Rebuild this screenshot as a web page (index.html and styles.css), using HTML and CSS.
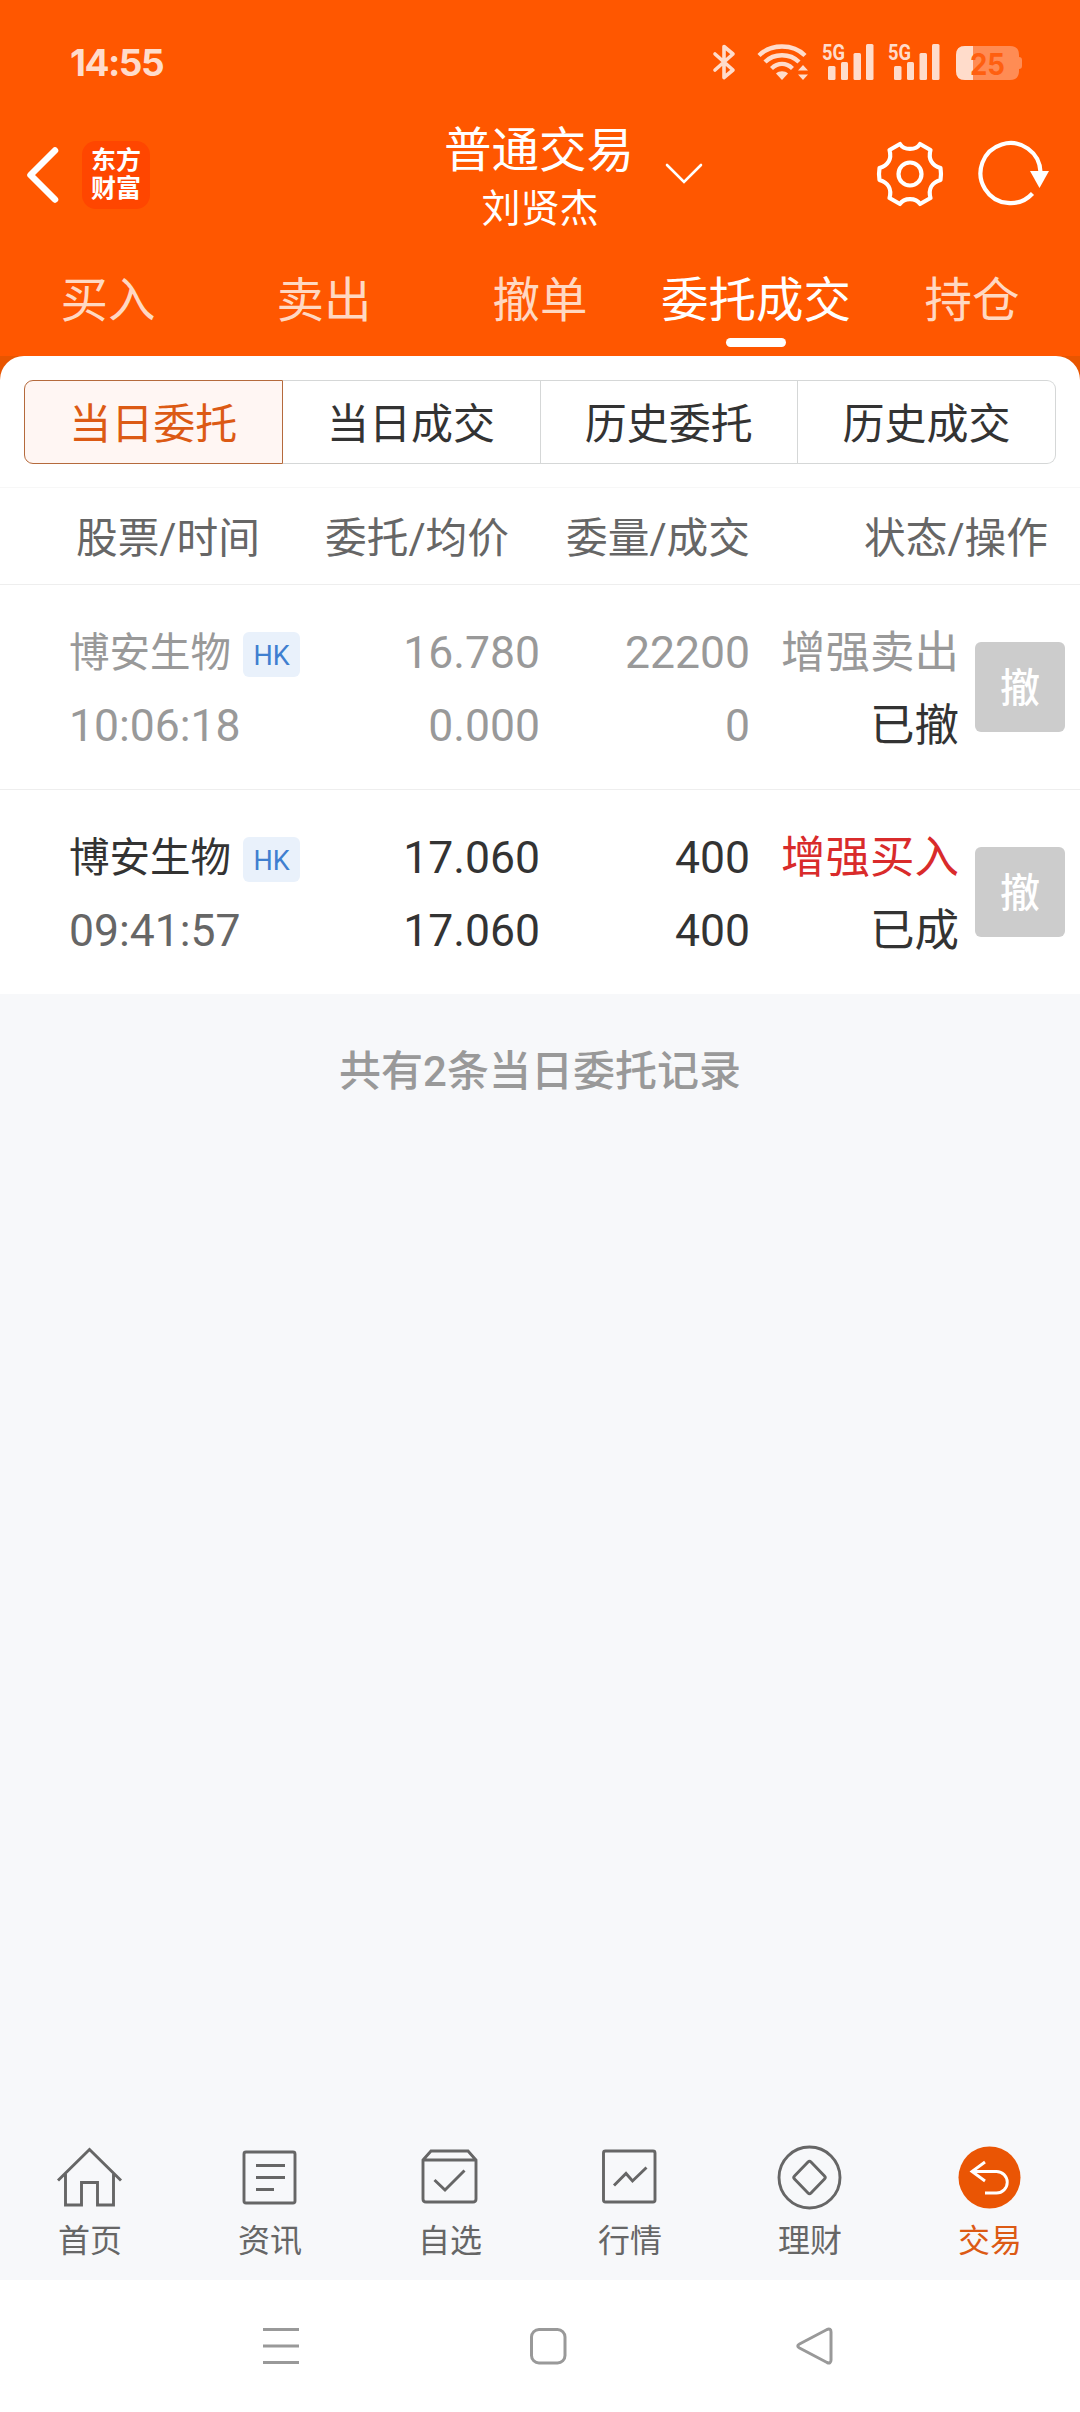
FILE: index.html
```
<!DOCTYPE html>
<html lang="zh-CN">
<head>
    <meta charset="UTF-8">
    <meta name="viewport" content="width=device-width, initial-scale=1.0">
    <title>普通交易</title>
    <link rel="stylesheet" href="styles.css">
</head>
<body>
    <div class="screen">
        <header class="top">
            <div class="statusbar">
                <span class="clock">14:55</span>
                <div class="status-icons">
                    <svg class="bluetooth" width="24" height="38" viewBox="0 0 24 38" fill="none">
                        <path d="M3 11 L21 27 L12 34.5 V3.5 L21 11 L3 27" stroke="#ffdccb" stroke-width="3.6" stroke-linejoin="round" stroke-linecap="round"/>
                    </svg>
                    <svg class="wifi" width="52" height="38" viewBox="0 0 52 38" fill="none">
                        <path d="M2 12.5 C14 .5 36 .5 48 12.5 M8 19 C17 10 33 10 42 19 M14.500 25.500 C21 19.500 29 19.500 35.500 25.500" stroke="#ffdccb" stroke-width="4.400"/>
                        <path d="M19 30.500 C22 27.500 28 27.500 31 30.500 L25 37Z" fill="#ffdccb"/>
                        <path d="M41 27.500 L46 22 L51 27.500Z M41 31.500 L46 37 L51 31.500Z" fill="#ffdccb"/>
                    </svg>
                    <svg class="signal" width="52" height="38" viewBox="0 0 52 38" fill="#ffdccb">
                        <text class="net" x="0" y="16.500" textLength="23" lengthAdjust="spacingAndGlyphs">5G</text>
                        <rect x="6" y="23" width="7.500" height="14" rx="1.500"/>
                        <rect x="19" y="19" width="7" height="18" rx="1.500"/>
                        <rect x="31.500" y="10" width="7.500" height="27" rx="1.500"/>
                        <rect x="44" y="1" width="7.500" height="36" rx="1.500"/>
                    </svg>
                    <svg class="signal" width="52" height="38" viewBox="0 0 52 38" fill="#ffdccb">
                        <text class="net" x="0" y="16.500" textLength="23" lengthAdjust="spacingAndGlyphs">5G</text>
                        <rect x="6" y="23" width="7.500" height="14" rx="1.500"/>
                        <rect x="19" y="19" width="7" height="18" rx="1.500"/>
                        <rect x="31.500" y="10" width="7.500" height="27" rx="1.500"/>
                        <rect x="44" y="1" width="7.500" height="36" rx="1.500"/>
                    </svg>
                    <svg class="battery" width="66" height="34" viewBox="0 0 66 34">
                        <path d="M9 0 H54 Q63 0 63 9 V11 Q66 11 66 14 V20 Q66 23 63 23 V25 Q63 34 54 34 H9 Q0 34 0 25 V9 Q0 0 9 0Z" fill="#ff8c54"/>
                        <path d="M17 0 H9 Q0 0 0 9 V25 Q0 34 9 34 H17Z" fill="#ffdccb"/>
                        <text class="level" x="14" y="28.500" textLength="35" lengthAdjust="spacingAndGlyphs">25</text>
                    </svg>
                </div>
            </div>

            <div class="titlebar">
                <div class="title-left">
                    <svg width="34" height="60" viewBox="0 0 34 60" fill="none">
                        <path d="M30 5.500 L5.500 30 L30 54.500" stroke="#fff" stroke-width="6.500" stroke-linecap="round" stroke-linejoin="round"/>
                    </svg>
                    <div class="logo">东方<br>财富</div>
                </div>
                <div class="title-center">
                    <h1>普通交易</h1>
                    <p>刘贤杰</p>
                </div>
                <div class="title-right">
                    <svg class="arrow-down" width="38" height="24" viewBox="0 0 38 24" fill="none">
                        <path d="M2 3 L19 20 L36 3" stroke="#fff" stroke-width="2.600" stroke-linecap="round"/>
                    </svg>
                    <svg class="gear" width="68" height="68" viewBox="0 0 68 68" fill="none" stroke="#fff" stroke-width="4.200">
                        <path d="M24 4 C28 10.500 40 10.500 44 4 L54.500 10 C52 19 56 25.500 64.500 28 Q65.500 34 64.500 40 C56 42.500 52 49 54.500 58 L44 64 C40 57.500 28 57.500 24 64 L13.500 58 C16 49 12 42.500 3.500 40 Q2.500 34 3.500 28 C12 25.500 16 19 13.500 10Z" stroke-linejoin="round"/>
                        <circle cx="34" cy="34" r="11.500"/>
                    </svg>
                    <svg class="refresh" width="72" height="68" viewBox="0 0 72 68" fill="none">
                        <path d="M54.500 53.500 A30 30 0 1 1 62.500 32" stroke="#fff" stroke-width="4.200"/>
                        <path d="M52 31 H71 L61.500 48Z" fill="#fff"/>
                    </svg>
                </div>
            </div>

            <nav class="tabs">
                <a class="tab">买入</a>
                <a class="tab">卖出</a>
                <a class="tab">撤单</a>
                <a class="tab active">委托成交</a>
                <a class="tab">持仓</a>
            </nav>
        </header>

        <main class="sheet-wrap">
            <section class="sheet">
                <div class="segments">
                    <button class="segment selected">当日委托</button>
                    <button class="segment">当日成交</button>
                    <button class="segment">历史委托</button>
                    <button class="segment">历史成交</button>
                </div>

                <div class="row head">
                    <span>股票/时间</span>
                    <span>委托/均价</span>
                    <span>委量/成交</span>
                    <span>状态/操作</span>
                </div>

                <div class="row order cancelled">
                    <div class="cell stock">
                        <div class="name">博安生物<span class="badge">HK</span></div>
                        <div class="time">10:06:18</div>
                    </div>
                    <div class="cell"><div>16.780</div><div>0.000</div></div>
                    <div class="cell"><div>22200</div><div>0</div></div>
                    <div class="cell"><div>增强卖出</div><div class="state">已撤</div></div>
                    <button class="cancel">撤</button>
                </div>

                <div class="row order">
                    <div class="cell stock">
                        <div class="name">博安生物<span class="badge">HK</span></div>
                        <div class="time">09:41:57</div>
                    </div>
                    <div class="cell"><div>17.060</div><div>17.060</div></div>
                    <div class="cell"><div>400</div><div>400</div></div>
                    <div class="cell"><div class="buy">增强买入</div><div class="state">已成</div></div>
                    <button class="cancel">撤</button>
                </div>
            </section>
        </main>

        <p class="summary">共有2条当日委托记录</p>

        <nav class="bottom">
            <a class="item">
                <svg width="70" height="70" viewBox="0 0 70 70">
                    <path d="M3 40.500 L34.500 9.500 L66 40.500 M10.500 34 V65 H26.500 V42.500 H42.500 V65 H58.500 V34"/>
                </svg>
                <span>首页</span>
            </a>
            <a class="item">
                <svg width="70" height="70" viewBox="0 0 70 70">
                    <rect x="9" y="12" width="51" height="51" rx="2"/>
                    <path d="M21 25.500 H50 M21 37.500 H50 M21 49.500 H39"/>
                </svg>
                <span>资讯</span>
            </a>
            <a class="item">
                <svg width="70" height="70" viewBox="0 0 70 70">
                    <path d="M8 20 L16 11 H53 L61 20 V59 Q61 62 58 62 H11 Q8 62 8 59Z M8 20 H61 M19.500 40 L30 50 L49.500 30.500"/>
                </svg>
                <span>自选</span>
            </a>
            <a class="item">
                <svg width="70" height="70" viewBox="0 0 70 70">
                    <rect x="8.500" y="11" width="51.500" height="51" rx="2"/>
                    <path d="M19 45.500 L31 33.500 L37.500 41 L51.500 27.500"/>
                </svg>
                <span>行情</span>
            </a>
            <a class="item">
                <svg width="70" height="70" viewBox="0 0 70 70">
                    <circle cx="34.500" cy="37.500" r="30.500"/>
                    <path d="M33 22 Q34.500 20.500 36 22 L49.500 36 Q51 37.500 49.500 39 L36 53 Q34.500 54.500 33 53 L19.500 39 Q18 37.500 19.500 36Z"/>
                </svg>
                <span>理财</span>
            </a>
            <a class="item on">
                <svg width="70" height="70" viewBox="0 0 70 70">
                    <circle class="disc" cx="34.500" cy="37.500" r="31"/>
                    <path d="M30 22 L17 31.500 L30 41 M17 31.500 H41.500 A10.500 10.500 0 0 1 41.500 53 H30"/>
                </svg>
                <span>交易</span>
            </a>
        </nav>

        <!-- android system keys -->
        <div class="syskeys">
            <svg width="40" height="40" viewBox="0 0 40 40">
                <path d="M2 3.500 H38 M2 20 H38 M2 36.500 H38"/>
            </svg>
            <svg width="40" height="40" viewBox="0 0 40 40">
                <rect x="3.500" y="3.500" width="33.500" height="33.500" rx="7.500"/>
            </svg>
            <svg width="40" height="40" viewBox="0 0 40 40">
                <path d="M4.500 18 L32 3.500 Q36 2 36 6 V34 Q36 38 32 36.500 L4.500 22 Q1 20 4.500 18Z"/>
            </svg>
        </div>
    </div>
</body>
</html>
```
FILE: styles.css
```
* {
    box-sizing: border-box;
    margin: 0;
    padding: 0;
}

body {
    font-family: Roboto, "Noto Sans CJK SC", sans-serif;
    background: #f7f8fa;
    color: #333;
}

svg {
    display: block;
    flex: none;
    overflow: visible;
}

button {
    font-family: inherit;
    border: none;
    background: none;
}

.screen {
    width: 1080px;
    height: 2412px;
    display: flex;
    flex-direction: column;
    background: #f7f8fa;
}

/* orange header */
.top {
    height: 356px;
    background: #ff5700;
    color: #fff;
}

.statusbar {
    height: 124px;
    padding: 0 58px 0 70px;
    display: flex;
    align-items: center;
    justify-content: space-between;
}

.clock {
    font-family: Inter, sans-serif;
    font-size: 37px;
    font-weight: 700;
    letter-spacing: -1.5px;
    color: #ffdccb;
}

.status-icons {
    display: flex;
    align-items: center;
}

.wifi {
    margin-left: 21px;
}

.signal {
    margin-left: 14px;
}

.wifi + .signal {
    margin-left: 13px;
}

.battery {
    margin: 2px 0 0 16px;
}

.net {
    font-family: Roboto, sans-serif;
    font-size: 22px;
    font-weight: 700;
}

.level {
    font-family: Inter, sans-serif;
    font-size: 30px;
    font-weight: 700;
    fill: #ff5f10;
}

.titlebar {
    height: 120px;
    display: grid;
    grid-template-columns: 1fr 188px 1fr;
}

.title-left {
    display: flex;
    align-items: center;
    padding: 0 0 18px 25px;
}

.logo {
    width: 68px;
    height: 68px;
    margin-left: 23px;
    padding-top: 6px;
    border-radius: 14px;
    background: #ff4600;
    font-size: 25px;
    font-weight: 700;
    line-height: 28px;
    text-align: center;
}

.title-center {
    text-align: center;
    white-space: nowrap;
}

.title-center h1 {
    font-size: 47.5px;
    font-weight: 400;
    line-height: 54px;
    margin-left: -2px;
}

.title-center p {
    font-size: 39px;
    line-height: 62px;
}

.title-right {
    display: flex;
    align-items: center;
    padding: 0 30px 20px 31px;
}

.arrow-down {
    margin-right: auto;
}

.refresh {
    margin-left: 34px;
}

.tabs {
    height: 112px;
    display: grid;
    grid-template-columns: repeat(5, 1fr);
}

.tab {
    display: flex;
    flex-direction: column;
    align-items: center;
    font-size: 47.5px;
    line-height: 94px;
    padding-top: 10px;
    color: #ffd8c2;
    white-space: nowrap;
}

.tab.active {
    color: #fff;
}

.tab.active::after {
    content: "";
    width: 60px;
    height: 9px;
    margin-top: -10px;
    border-radius: 5px;
    background: #fff;
}

/* white sheet with the order list */
.sheet-wrap {
    background: #e85500;
}

.sheet {
    height: 638px;
    padding-top: 24px;
    background: #fff;
    border-radius: 24px 24px 0 0;
}

.segments {
    display: flex;
    height: 84px;
    margin: 0 24px 23px;
}

.segment {
    flex: 1;
    padding-top: 5px;
    border: 1px solid #d5d7d7;
    border-left-width: 0;
    font-size: 42px;
    line-height: 77px;
    color: #333;
}

.segment:last-child {
    border-radius: 0 9px 9px 0;
}

.segment.selected {
    border: 1px solid #b56a3c;
    border-radius: 9px 0 0 9px;
    background: #fff6f3;
    color: #dc5a14;
}

.row {
    display: grid;
    grid-template-columns: 240px 230px 210px 209px 90px;
    padding-left: 70px;
}

.row.head {
    height: 98px;
    grid-template-columns: 182px 251px 241px 298px;
    padding-left: 76px;
    border-top: 1px solid #f7f7f7;
    border-bottom: 1px solid #eee;
    font-size: 41.7px;
    line-height: 102px;
    color: #666;
    text-align: right;
    white-space: nowrap;
}

.order {
    height: 205px;
    padding-top: 32px;
    border-bottom: 1px solid #eee;
}

.order:last-child {
    border-bottom: none;
    height: 204px;
}

.cell {
    font-size: 44.5px;
    line-height: 73px;
    text-align: right;
    white-space: nowrap;
}

.stock {
    text-align: left;
    margin-left: -1px;
}

.name {
    display: flex;
    align-items: center;
    height: 73px;
    font-size: 40.5px;
}

.badge {
    width: 57px;
    height: 45px;
    margin: 1px 0 0 12px;
    border-radius: 6px;
    background: #e9f1fb;
    color: #3f7fd0;
    font-size: 27px;
    line-height: 48px;
    text-align: center;
}

.time {
    color: #666;
}

.cancelled .cell,
.cancelled .time {
    color: #999;
}

.cell .state {
    color: #333;
}

.cell .buy {
    color: #d92b2b;
}

.cancel {
    width: 90px;
    height: 90px;
    margin: 25px 0 0 16px;
    border-radius: 6px;
    background: #ccc;
    color: #fff;
    font-size: 40px;
    font-weight: 500;
    line-height: 94px;
}

.summary {
    padding-top: 51px;
    font-size: 42px;
    font-weight: 500;
    line-height: 54px;
    text-align: center;
    color: #999;
}

/* bottom navigation */
.bottom {
    display: grid;
    grid-template-columns: repeat(6, 1fr);
    height: 140px;
    margin-top: auto;
}

.item {
    display: flex;
    flex-direction: column;
    align-items: center;
    font-size: 32px;
    line-height: 63px;
    color: #666;
}

.item svg {
    fill: none;
    stroke: #666;
    stroke-width: 2.9;
}

.item.on {
    color: #dc5a14;
}

.item.on svg {
    stroke: #fff;
}

.item .disc {
    fill: #ea5504;
    stroke: none;
}

.syskeys {
    height: 132px;
    padding: 46px 245px 0 261px;
    display: flex;
    justify-content: space-between;
    background: #fff;
}

.syskeys svg {
    fill: none;
    stroke: #999;
    stroke-width: 3;
}
```
